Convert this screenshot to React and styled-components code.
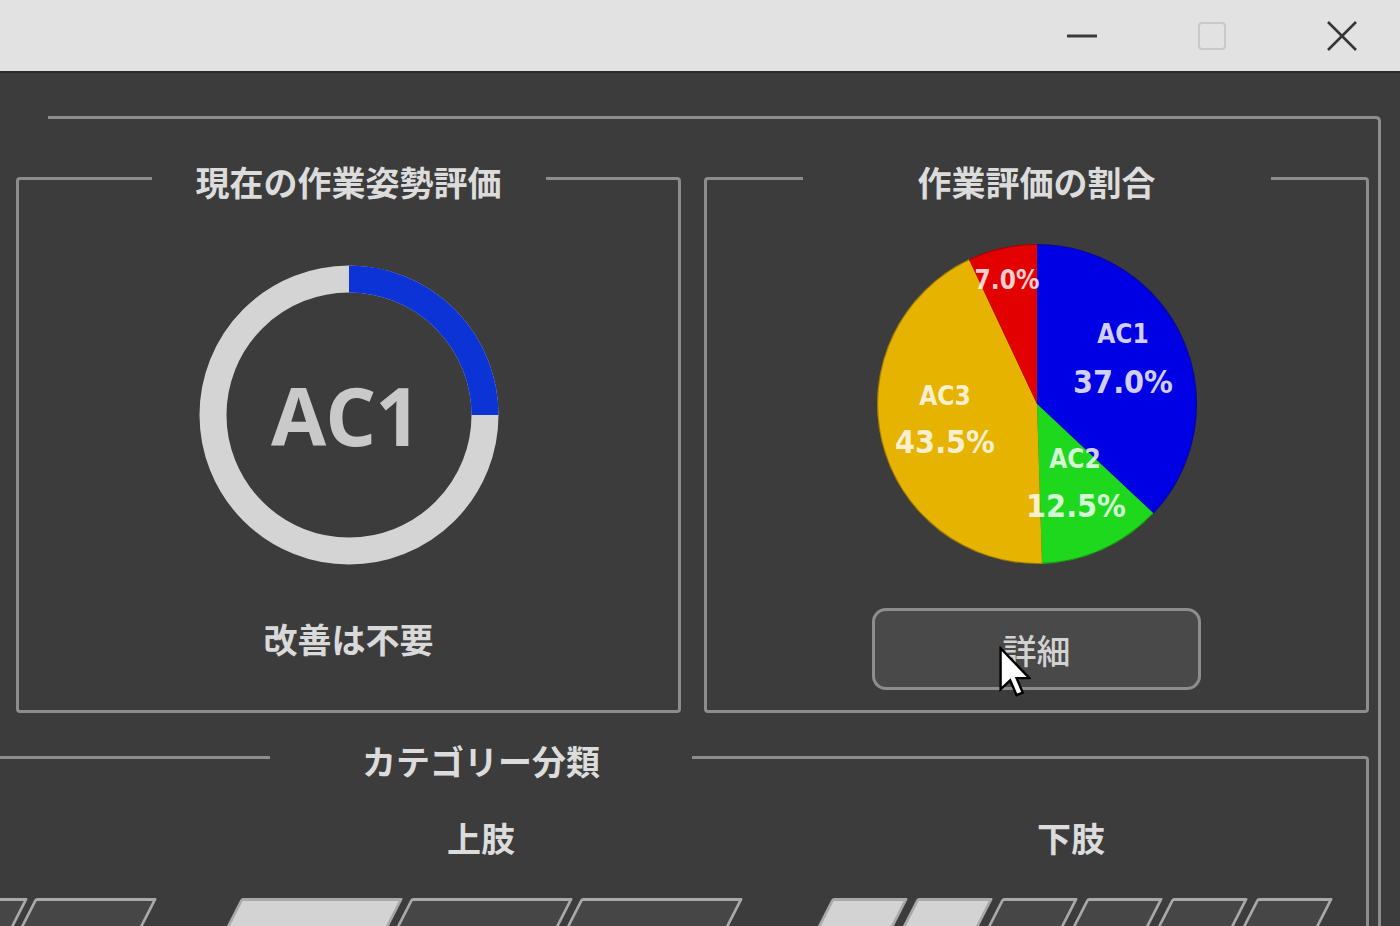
import React from 'react';
import styled, { createGlobalStyle } from 'styled-components';

const GlobalStyle = createGlobalStyle`
  html, body {
    margin: 0;
    padding: 0;
    background: #3c3c3c;
    overflow: hidden;
  }
  * { box-sizing: border-box; }
`;

const JP = `"Noto Sans CJK JP", "Noto Sans", sans-serif`;

const pieData = [
  { name: 'AC1', value: 37.0, color: '#0000e4', name_at: [247, 91], pct_at: [247, 139] },
  { name: 'AC2', value: 12.5, color: '#1ed81e', name_at: [199, 216], pct_at: [200, 263] },
  { name: 'AC3', value: 43.5, color: '#e6b400', name_at: [69, 153], pct_at: [69, 199] },
  { name: 'AC4', value: 7.0, color: '#e20000', name_at: null, pct_at: [131, 37] },
];

function slicePath(cx, cy, r, a0, a1) {
  const pt = (a) => {
    const rad = (a * Math.PI) / 180;
    return `${(cx + r * Math.sin(rad)).toFixed(2)} ${(cy - r * Math.cos(rad)).toFixed(2)}`;
  };
  const large = a1 - a0 > 180 ? 1 : 0;
  return `M${cx} ${cy} L${pt(a0)} A${r} ${r} 0 ${large} 1 ${pt(a1)} Z`;
}

export default function App() {
  let start = 0;
  const slices = pieData.map((d) => {
    const a0 = start;
    const a1 = start + (d.value / 100) * 360;
    start = a1;
    return { ...d, path: slicePath(161, 161, 160, a0, a1) };
  });

  const ringR = 136;
  const circ = 2 * Math.PI * ringR;

  return (
    <>
      <GlobalStyle />
      <Window>
        <TitleBar>
          <WinButton aria-label="minimize">
            <svg width="30" height="4" viewBox="0 0 30 4">
              <rect x="0" y="0.5" width="30" height="3" fill="#3a3a3a" />
            </svg>
          </WinButton>
          <WinButton aria-label="maximize">
            <svg width="30" height="30" viewBox="0 0 30 30">
              <rect x="2" y="2" width="26" height="26" rx="3" fill="none" stroke="#c9c9c9" strokeWidth="2" />
            </svg>
          </WinButton>
          <WinButton aria-label="close">
            <svg width="32" height="32" viewBox="0 0 32 32">
              <path d="M2 2 L30 30 M30 2 L2 30" stroke="#353535" strokeWidth="2.6" />
            </svg>
          </WinButton>
        </TitleBar>

        <Frame>
          <TopRow>
            <GroupBox $height={559}>
              <Legend $pad={44}>現在の作業姿勢評価</Legend>
              <PanelBody>
                <RingStack>
                  <svg width="300" height="300" viewBox="0 0 300 300">
                    <circle cx="150" cy="150" r={ringR} fill="none" stroke="#d4d4d4" strokeWidth="27" />
                    <circle
                      cx="150"
                      cy="150"
                      r={ringR}
                      fill="none"
                      stroke="#0b33d6"
                      strokeWidth="27"
                      strokeDasharray={`${circ * 0.25} ${circ}`}
                      transform="rotate(-90 150 150)"
                    />
                  </svg>
                  <RingLabel>AC1</RingLabel>
                </RingStack>
                <StatusText>改善は不要</StatusText>
              </PanelBody>
            </GroupBox>

            <GroupBox $height={559}>
              <Legend $pad={115}>作業評価の割合</Legend>
              <PanelBody>
                <PieBox>
                  <svg width="322" height="322" viewBox="0 0 322 322">
                    {slices.map((s) => (
                      <path key={s.name} d={s.path} fill={s.color} />
                    ))}
                    <circle cx="161" cy="161" r="159.5" fill="none" stroke="rgba(30,20,0,0.35)" strokeWidth="1.2" />
                    {slices.map((s) => (
                      <g key={s.name + 't'}>
                        {s.name_at && (
                          <PieName x={s.name_at[0]} y={s.name_at[1]}>
                            {s.name}
                          </PieName>
                        )}
                        <PiePct x={s.pct_at[0]} y={s.pct_at[1]} $small={!s.name_at}>
                          {s.value.toFixed(1)}%
                        </PiePct>
                      </g>
                    ))}
                  </svg>
                </PieBox>
                <DetailButton>
                  詳細
                  <Cursor width="32" height="52" viewBox="0 0 12 19">
                    <path
                      d="M0.6 0.6 L0.6 16 L4.2 12.6 L6.6 18.2 L8.9 17.2 L6.6 11.8 L11.4 11.8 Z"
                      fill="#ffffff"
                      stroke="#000000"
                      strokeWidth="0.9"
                      strokeLinejoin="miter"
                    />
                  </Cursor>
                </DetailButton>
              </PanelBody>
            </GroupBox>
          </TopRow>

          <CategoryBox>
            <Legend $pad={92}>カテゴリー分類</Legend>
            <Columns>
              <Column>
                <LimbLabel />
                <BarRow $gap={7}>
                  {[0, 1, 2, 3].map((i) => (
                    <Bar key={i} $w={122} />
                  ))}
                </BarRow>
              </Column>
              <Column>
                <LimbLabel>上肢</LimbLabel>
                <BarRow $gap={8}>
                  {[0, 1, 2].map((i) => (
                    <Bar key={i} $w={162} $filled={i < 1} />
                  ))}
                </BarRow>
              </Column>
              <Column>
                <LimbLabel>下肢</LimbLabel>
                <BarRow $gap={9}>
                  {[0, 1, 2, 3, 4, 5].map((i) => (
                    <Bar key={i} $w={76} $filled={i < 2} />
                  ))}
                </BarRow>
              </Column>
            </Columns>
          </CategoryBox>
        </Frame>
      </Window>
    </>
  );
}

const Window = styled.div`
  width: 1400px;
  height: 926px;
  overflow: hidden;
  background: #3c3c3c;
  font-family: ${JP};
`;

const TitleBar = styled.div`
  height: 73px;
  background: #e2e2e2;
  border-bottom: 2px solid #2a2a2a;
  display: flex;
  align-items: center;
  justify-content: flex-end;
  gap: 70px;
  padding-right: 28px;
`;

const WinButton = styled.div`
  width: 60px;
  height: 50px;
  display: flex;
  align-items: center;
  justify-content: center;
`;

const Frame = styled.div`
  margin-top: 43px;
  margin-left: 48px;
  width: 1333px;
  height: 900px;
  border-top: 3px solid #8d8d8d;
  border-right: 3px solid #8d8d8d;
  border-top-right-radius: 5px;
  padding-top: 35px;
  padding-right: 9px;
`;

const TopRow = styled.div`
  margin-left: -32px;
  display: flex;
  gap: 23px;
`;

const GroupBox = styled.fieldset`
  margin: 0;
  padding: 0;
  min-width: 0;
  width: 665px;
  height: ${(p) => p.$height}px;
  border: 3px solid #8d8d8d;
  border-radius: 4px;
`;

const Legend = styled.legend`
  margin: 0 auto;
  padding: 8px ${(p) => p.$pad}px 0;
  font-family: ${JP};
  font-size: 34px;
  font-weight: 700;
  line-height: 40px;
  color: #dcdcdc;
`;

const PanelBody = styled.div`
  display: flex;
  flex-direction: column;
  align-items: center;
`;

const RingStack = styled.div`
  margin-top: 63px;
  display: grid;
  place-items: center;
  & > * {
    grid-area: 1 / 1;
  }
`;

const RingLabel = styled.div`
  font-family: "Open Sans", "Noto Sans", sans-serif;
  font-weight: 700;
  font-size: 80px;
  line-height: 1;
  color: #c9c9c9;
  margin-right: 6px;
  letter-spacing: -1px;
`;

const StatusText = styled.div`
  margin-top: 54px;
  font-size: 34px;
  font-weight: 700;
  line-height: 40px;
  color: #d9d9d9;
`;

const PieBox = styled.div`
  margin-top: 41px;
  width: 322px;
  height: 322px;
`;

const PieName = styled.text`
  font-family: "DejaVu Sans Condensed", "DejaVu Sans", sans-serif;
  font-stretch: condensed;
  font-weight: 700;
  font-size: 26px;
  fill: #ffffff;
  fill-opacity: 0.82;
  text-anchor: middle;
  dominant-baseline: central;
`;

const PiePct = styled.text`
  font-family: "DejaVu Sans Condensed", "DejaVu Sans", sans-serif;
  font-stretch: condensed;
  font-weight: 700;
  font-size: ${(p) => (p.$small ? 26 : 32)}px;
  fill: #ffffff;
  fill-opacity: 0.82;
  text-anchor: middle;
  dominant-baseline: central;
`;

const DetailButton = styled.div`
  position: relative;
  margin-top: 43px;
  width: 329px;
  height: 82px;
  border: 3px solid #8d8d8d;
  border-radius: 14px;
  background: #494949;
  display: flex;
  align-items: center;
  justify-content: center;
  font-size: 34px;
  font-weight: 500;
  color: #d2d2d2;
`;

const Cursor = styled.svg`
  position: absolute;
  left: 124px;
  top: 35px;
`;

const CategoryBox = styled.fieldset`
  margin: 20px 0 0 -455px;
  padding: 0;
  min-width: 0;
  width: 1776px;
  height: 280px;
  border: 3px solid #8d8d8d;
  border-radius: 4px;
`;

const Columns = styled.div`
  display: grid;
  grid-template-columns: repeat(3, 590px);
`;

const Column = styled.div`
  display: flex;
  flex-direction: column;
  align-items: center;
`;

const LimbLabel = styled.div`
  margin-top: 37px;
  height: 40px;
  font-size: 34px;
  font-weight: 700;
  line-height: 40px;
  color: #dcdcdc;
`;

const BarRow = styled.div`
  margin-top: 40px;
  display: flex;
  gap: ${(p) => p.$gap}px;
`;

const Bar = styled.div`
  width: ${(p) => p.$w}px;
  height: 44px;
  border: 3px solid #a9a9a9;
  border-radius: 2px;
  background: ${(p) => (p.$filled ? '#d3d3d3' : '#464646')};
  transform: skewX(-27deg);
`;
